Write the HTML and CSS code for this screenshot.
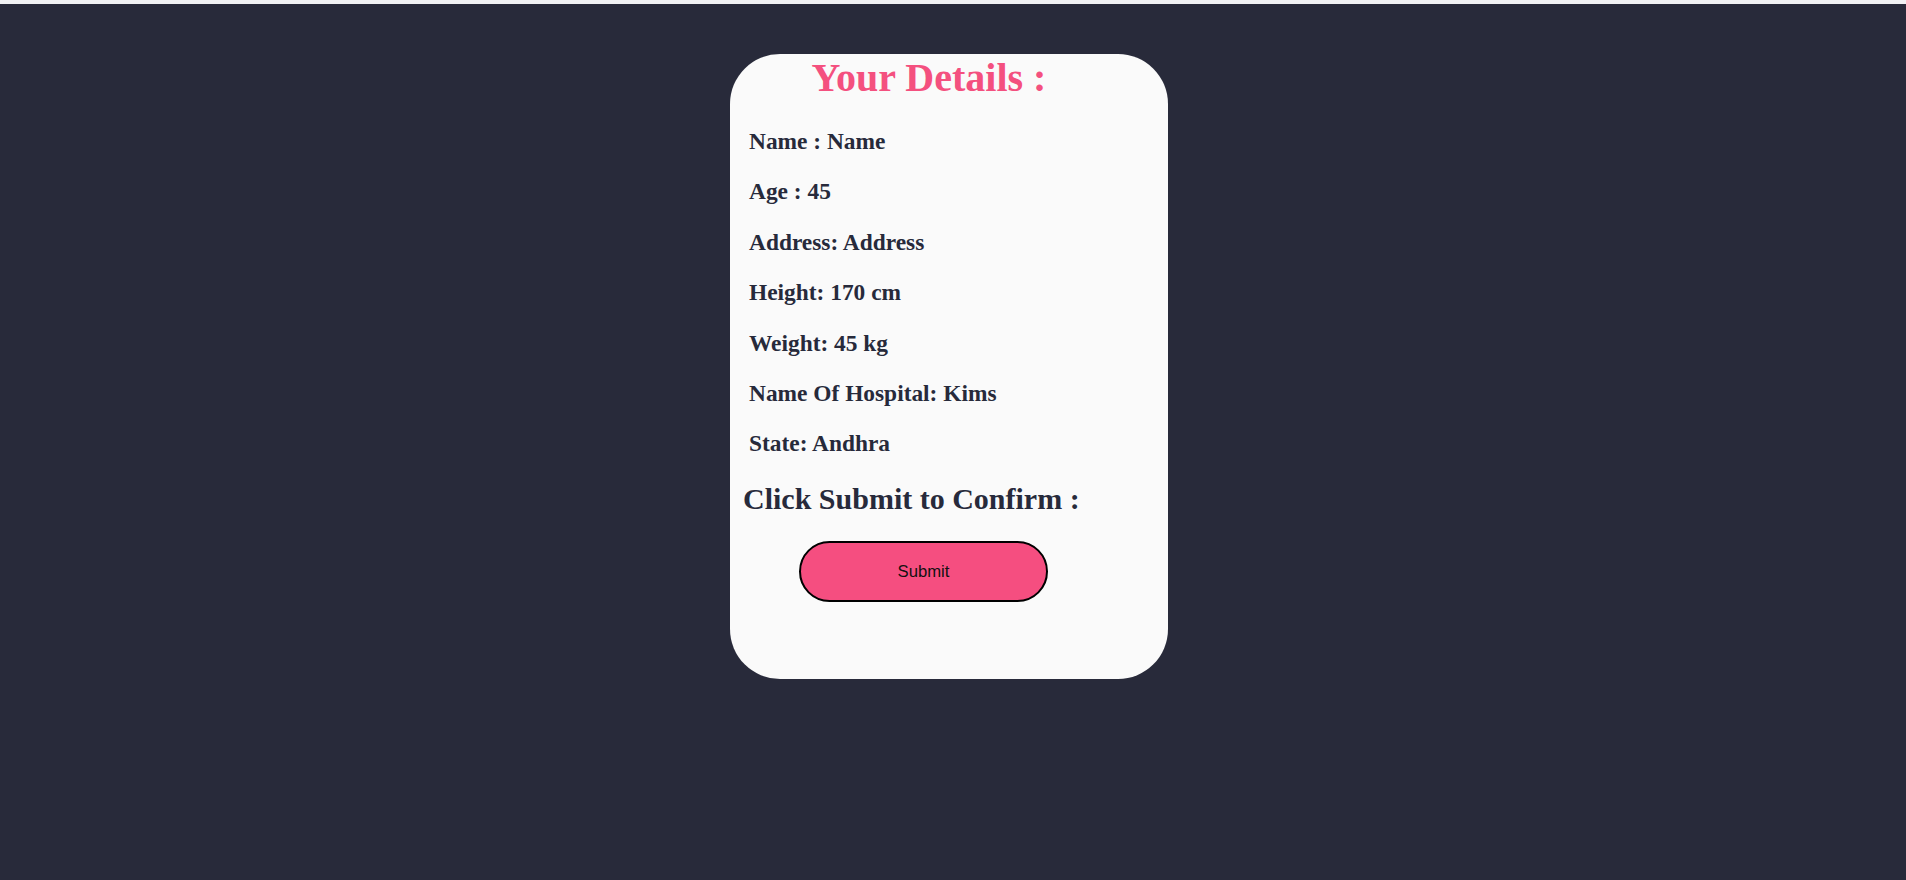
FILE: index.html
```html
<!DOCTYPE html>
<html>
<head>
<meta charset="utf-8">
<title>Your Details</title>
<link rel="stylesheet" href="styles.css">
</head>
<body>
<div class="page">
  <div class="card">
    <h1 class="title">Your Details :</h1>
    <div class="details">
      <h3 class="row">Name : Name</h3>
      <h3 class="row">Age : 45</h3>
      <h3 class="row">Address: Address</h3>
      <h3 class="row">Height: 170 cm</h3>
      <h3 class="row">Weight: 45 kg</h3>
      <h3 class="row">Name Of Hospital: Kims</h3>
      <h3 class="row">State: Andhra</h3>
    </div>
    <h2 class="confirm">Click Submit to Confirm :</h2>
    <div class="actions">
      <button class="submit" type="button">Submit</button>
    </div>
  </div>
</div>
</body>
</html>
```
FILE: styles.css
```css
html, body {
  margin: 0;
  padding: 0;
}
body {
  background: #282a3a;
  height: 880px;
  font-family: "Liberation Serif", "Times New Roman", serif;
  border-top: 4px solid #f1f1f3;
  box-sizing: border-box;
}
.page {
  display: flex;
  justify-content: center;
  padding-top: 50px;
  padding-right: 8px;
}
.card {
  width: 438px;
  height: 625px;
  box-sizing: border-box;
  background: #fafafa;
  border-radius: 50px;
  display: flex;
  flex-direction: column;
  padding-top: 1px;
}
.title {
  margin: 0;
  font-size: 40px;
  font-weight: bold;
  color: #f4507f;
  text-align: center;
  padding-right: 40px;
  line-height: 46px;
}
.details {
  display: flex;
  flex-direction: column;
  gap: 23.4px;
  margin-top: 27px;
  padding-left: 19px;
}
.row {
  margin: 0;
  font-size: 23.4px;
  font-weight: bold;
  line-height: 27px;
  color: #272a3b;
}
.confirm {
  margin: 24px 0 0 0;
  padding-left: 13px;
  font-size: 30px;
  line-height: 35px;
  font-weight: bold;
  color: #272a3b;
}
.actions {
  margin-top: 25px;
  padding-left: 69px;
}
.submit {
  width: 249px;
  height: 61px;
  box-sizing: border-box;
  background: #f54e80;
  border: 2px solid #000;
  border-radius: 31px;
  font-family: "Liberation Sans", Arial, sans-serif;
  font-size: 16.7px;
  color: #111;
  padding: 0;
}
```
